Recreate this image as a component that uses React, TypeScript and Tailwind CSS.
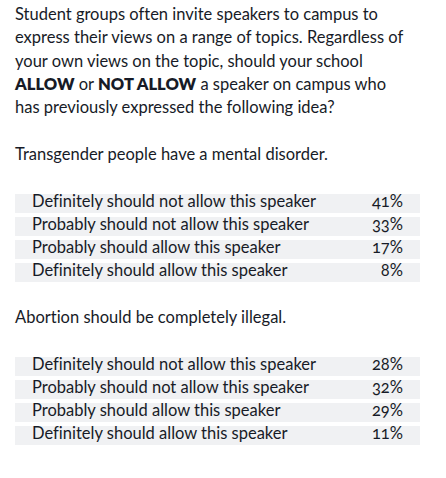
// Survey results card: question text plus two blocks of percentage rows

const question = [
  {
    statement: 'Transgender people have a mental disorder.',
    rows: [
      ['Definitely should not allow this speaker', '41%'],
      ['Probably should not allow this speaker', '33%'],
      ['Probably should allow this speaker', '17%'],
      ['Definitely should allow this speaker', '8%'],
    ],
  },
  {
    statement: 'Abortion should be completely illegal.',
    rows: [
      ['Definitely should not allow this speaker', '28%'],
      ['Probably should not allow this speaker', '32%'],
      ['Probably should allow this speaker', '29%'],
      ['Definitely should allow this speaker', '11%'],
    ],
  },
];

function ResultRows({ rows }: { rows: string[][] }) {
  return (
    <div className="flex flex-col gap-[4px]">
      {rows.map(([label, pct]) => (
        <div key={label} className="flex h-[19px] items-start justify-between bg-[#f0f1f3] pl-[17px] pr-[17px] leading-[15px]">
          <span>{label}</span>
          <span className="oldstyle-nums">{pct}</span>
        </div>
      ))}
    </div>
  );
}

export default function App() {
  return (
    <div className="min-h-screen w-[446px] bg-white pt-[3px] pl-[15px] pr-[26px] text-[16.5px] leading-[23.3px] text-[#171b27] [font-variant-ligatures:none] font-['Lato','Liberation_Sans',sans-serif]">
      <p>
        Student groups often invite speakers to campus to
        <br />
        express their views on a range of topics. Regardless of
        <br />
        your own views on the topic, should your school
        <br />
        <b className="font-extrabold">ALLOW</b> or <b className="font-extrabold">NOT ALLOW</b> a speaker on campus who
        <br />
        has previously expressed the following idea?
      </p>
      {question.map((q, i) => (
        <div key={q.statement} className={i === 0 ? 'mt-[23.3px]' : 'mt-[24.6px]'}>
          <p>{q.statement}</p>
          <div className="mt-[27.6px]">
            <ResultRows rows={q.rows} />
          </div>
        </div>
      ))}
    </div>
  );
}
